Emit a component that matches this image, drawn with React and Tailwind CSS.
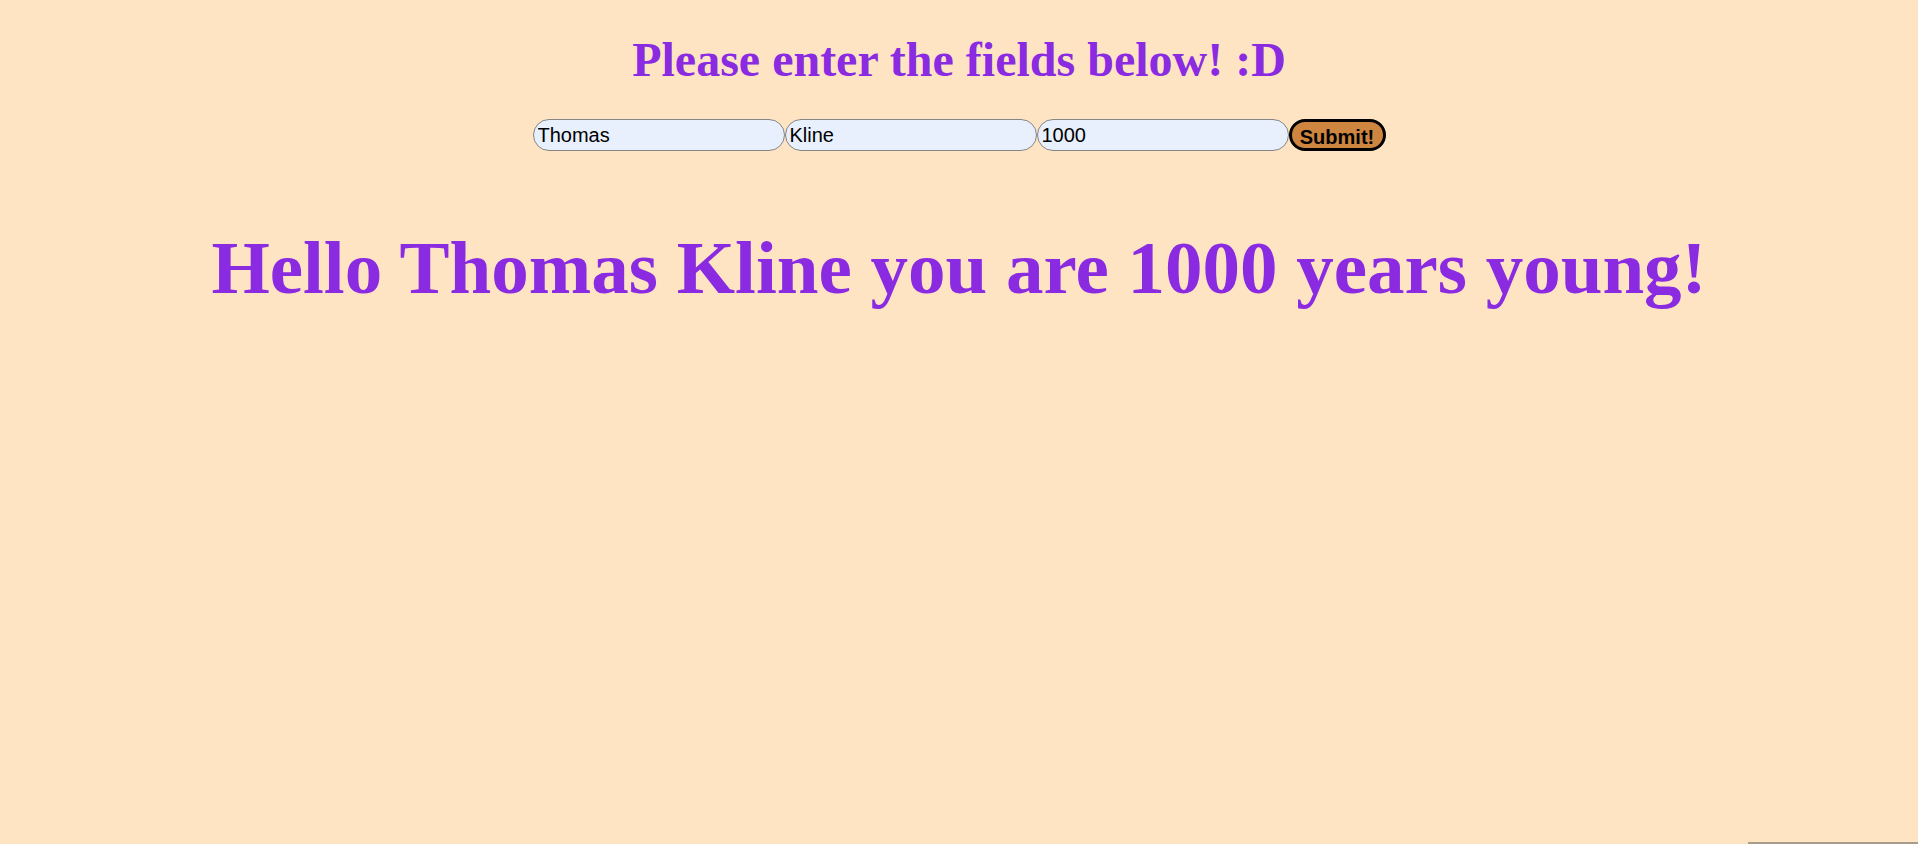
import { useState } from 'react';

const Field = ({ value, onChange }) => (
  <input
    className="w-[252px] h-8 px-1 rounded-full border border-[#858585] bg-[#e8f0fe] text-[20px] text-black outline-none"
    style={{ fontFamily: '"Liberation Sans", Arial, sans-serif' }}
    value={value}
    onChange={(e) => onChange(e.target.value)}
  />
);

const App = () => {
  const [first, setFirst] = useState('Thomas');
  const [last, setLast] = useState('Kline');
  const [age, setAge] = useState('1000');

  return (
    <div
      className="min-h-[844px] bg-[#ffe4c4] text-[#8a2be2] flex flex-col items-center"
      style={{ fontFamily: '"Liberation Serif", "Times New Roman", serif' }}
    >
      <h1 className="mt-[33px] text-[48px] font-bold leading-[53px]">Please enter the fields below! :D</h1>

      <form className="mt-[33px] flex items-center" onSubmit={(e) => e.preventDefault()}>
        <Field value={first} onChange={setFirst} />
        <Field value={last} onChange={setLast} />
        <Field value={age} onChange={setAge} />
        <button
          type="submit"
          className="w-[97px] h-8 rounded-full border-[3px] border-black bg-[#cd853f] text-[20px] font-bold text-black"
          style={{ fontFamily: '"Liberation Sans", Arial, sans-serif' }}
        >
          Submit!
        </button>
      </form>

      <h2 className="mt-[75px] text-[75px] font-bold leading-[83px]">
        Hello {first} {last} you are {age} years young!
      </h2>

      <div className="fixed right-0 bottom-0 w-[170px] h-[2px] bg-[#a99c8b]" />
    </div>
  );
};

export default App;
